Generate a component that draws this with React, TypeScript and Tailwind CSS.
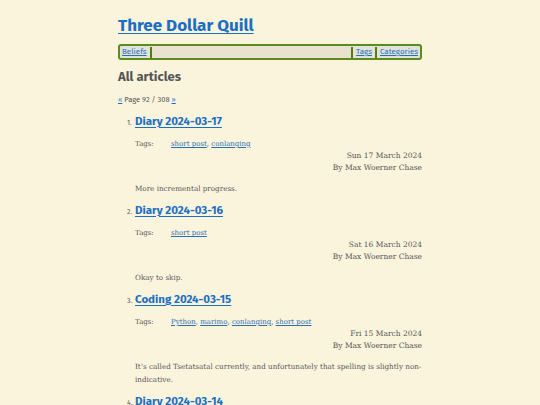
import React from "react";

type Article = {
  title: string;
  tags: string[];
  date: string;
  summary: string;
};

const articles: Article[] = [
  {
    title: "Diary 2024-03-17",
    tags: ["short post", "conlanging"],
    date: "Sun 17 March 2024",
    summary: "More incremental progress.",
  },
  {
    title: "Diary 2024-03-16",
    tags: ["short post"],
    date: "Sat 16 March 2024",
    summary: "Okay to skip.",
  },
  {
    title: "Coding 2024-03-15",
    tags: ["Python", "marimo", "conlanging", "short post"],
    date: "Fri 15 March 2024",
    summary:
      "It\u2019s called Tsetatsatal currently, and unfortunately that spelling is slightly non-indicative.",
  },
  {
    title: "Diary 2024-03-14",
    tags: ["short post"],
    date: "Thu 14 March 2024",
    summary: "Nothing much.",
  },
];

const sans = "font-['Fira_Sans','Noto_Sans',sans-serif]";
const serif = "font-['DejaVu_Serif','Liberation_Serif',serif]";

function NavBar() {
  return <span className="mx-[2px] inline-block h-[11px] w-[2px] bg-[#4f7f17]" />;
}

export default function App() {
  return (
    <div className="min-h-screen bg-[#fbf4dd] text-[#4a4a4a]">
      <div className="mx-auto w-[304px] pt-[14px]">
        <h1 className={`${sans} text-[17px] font-bold leading-[24px]`}>
          <a href="#" className="text-[#1b6fc2] underline underline-offset-2">
            Three Dollar Quill
          </a>
        </h1>

        <nav
          className={`${sans} mt-[6px] flex h-[16px] items-center rounded-[3px] border-2 border-[#5b8c1f] bg-[#e9e2ce] px-[1px] text-[8px]`}
        >
          <a href="#" className="bg-[#dfe3dc] px-[1px] text-[#2a6fb5] underline">
            Beliefs
          </a>
          <NavBar />
          <span className="flex-1" />
          <NavBar />
          <a href="#" className="bg-[#dfe3dc] px-[1px] text-[#2a6fb5] underline">
            Tags
          </a>
          <NavBar />
          <a href="#" className="bg-[#dfe3dc] px-[1px] text-[#2a6fb5] underline">
            Categories
          </a>
        </nav>

        <h2 className={`${sans} mt-[7px] text-[13px] font-bold leading-[20px] text-[#555]`}>
          All articles
        </h2>

        <p className={`${sans} mt-[7px] text-[7.5px] leading-[12px] text-[#555]`}>
          <a href="#" className="text-[#1b6fc2] underline">
            «
          </a>{" "}
          Page 92 / 308{" "}
          <a href="#" className="text-[#1b6fc2] underline">
            »
          </a>
        </p>

        <ol className="mt-[5px] flex flex-col">
          {articles.map((a, i) => (
            <li key={a.title} className="flex flex-col pl-[17px]">
              <div className="flex items-baseline">
                <span className={`${sans} -ml-[8px] w-[8px] text-[7px] text-[#555]`}>
                  {i + 1}.
                </span>
                <a
                  href="#"
                  className={`${sans} text-[11.5px] font-bold leading-[20px] text-[#1b6fc2] underline underline-offset-2`}
                >
                  {a.title}
                </a>
              </div>
              <div className={`${serif} mt-[7px] flex text-[7px] leading-[12px]`}>
                <span className="w-[36px] text-[#555]">Tags:</span>
                <span>
                  {a.tags.map((t, j) => (
                    <React.Fragment key={t}>
                      <a href="#" className="text-[#2a6fb5] underline">
                        {t}
                      </a>
                      {j < a.tags.length - 1 ? ", " : ""}
                    </React.Fragment>
                  ))}
                </span>
              </div>
              <div className={`${serif} text-right text-[7.5px] leading-[12px] text-[#555]`}>
                <div>{a.date}</div>
                <div>By Max Woerner Chase</div>
              </div>
              <p className={`${serif} mt-[8px] mb-[5px] text-[7.2px] leading-[13px] text-[#555]`}>
                {a.summary}
              </p>
            </li>
          ))}
        </ol>
      </div>
    </div>
  );
}
